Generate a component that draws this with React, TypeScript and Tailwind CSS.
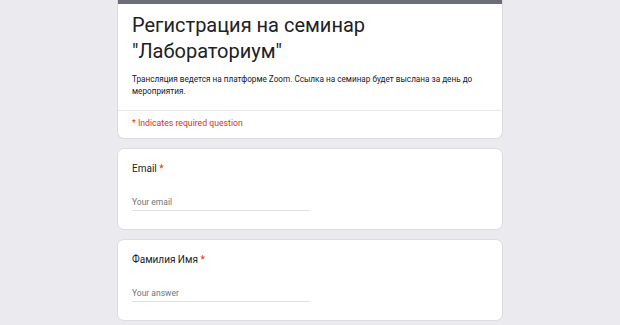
import React from "react";

const Question = ({ label, placeholder }: QuestionProps) => {
  return (
    <div className="rounded-[7px] border border-[#dadce0] bg-white px-[14px] pt-[12px] pb-[18px]">
      <div className="text-[10px] leading-[16px] text-[#202124]">
        {label} <span className="text-[#d93025]">*</span>
      </div>
      <div className="mt-[18px] w-[178px] border-b border-[#e0e0e0] pb-[1px] text-[8.5px] leading-[14px] text-[#70757a]">
        {placeholder}
      </div>
    </div>
  );
};

type QuestionProps = {
  label: string;
  placeholder: string;
};

const App = () => {
  return (
    <div className="min-h-[325px] w-full bg-[#ebebef] font-['Roboto',sans-serif]">
      <div className="mx-auto flex w-[386px] flex-col gap-[9px]">
        <div className="overflow-hidden rounded-b-[7px] border border-t-0 border-[#dadce0] bg-white">
          <div className="h-[4px] bg-[#6b6e76]" />
          <div className="px-[14px] pt-[8px] pb-[13px]">
            <h1 className="text-[20px] leading-[26px] text-[#202124]">
              Регистрация на семинар
              <br />
              "Лабораториум"
            </h1>
            <p className="mt-[9px] text-[8.2px] leading-[12px] text-[#202124]">
              Трансляция ведется на платформе Zoom. Ссылка на семинар будет выслана за день до мероприятия.
            </p>
          </div>
          <div className="border-t border-[#e8e8e8] px-[14px] pt-[6px] pb-[8px] text-[8.7px] leading-[13px] text-[#d93025]">
            * Indicates required question
          </div>
        </div>
        <Question label="Email" placeholder="Your email" />
        <Question label="Фамилия Имя" placeholder="Your answer" />
      </div>
    </div>
  );
};

export default App;
